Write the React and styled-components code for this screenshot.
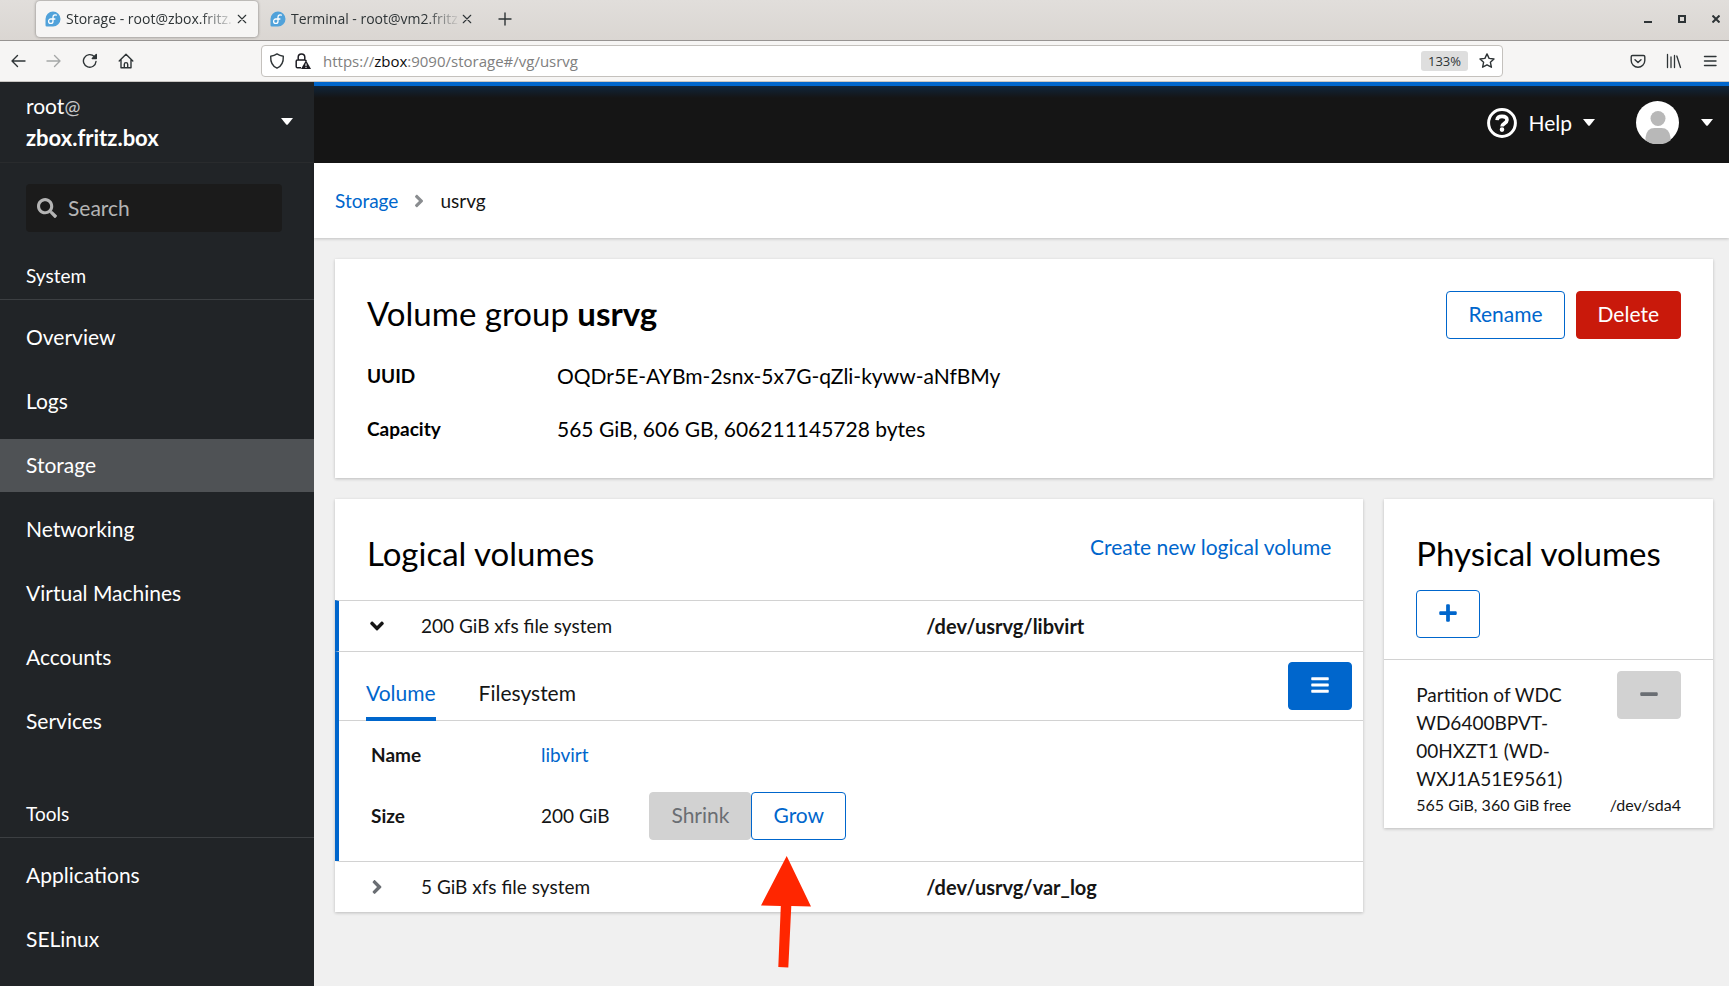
import { useState } from 'react';
import styled, { createGlobalStyle } from 'styled-components';
import {
  FaAngleDown,
  FaAngleRight,
  FaBars,
  FaMinus,
  FaPlus,
  FaSearch,
} from 'react-icons/fa';

const GlobalStyle = createGlobalStyle`
  *, *::before, *::after {
    box-sizing: border-box;
  }

  body {
    margin: 0;
    color: #151515;
    background: #f0f0f0;
    font-family: Lato, "Open Sans", sans-serif;
    font-size: 21px;
    line-height: 32px;
  }

  button, input {
    font: inherit;
    color: inherit;
  }

  button {
    cursor: pointer;
  }

  a {
    color: #06c;
    text-decoration: none;
  }

  svg {
    display: block;
    flex-shrink: 0;
  }
`;

const Window = styled.div`
  display: flex;
  flex-direction: column;
  min-height: 100vh;
`;

/* ---------- browser chrome ---------- */

const Chrome = styled.div`
  font-family: "Open Sans", "Noto Sans", sans-serif;
  font-size: 14px;
  line-height: 20px;
  color: #2e3436;
`;

const TabStrip = styled.div`
  display: flex;
  align-items: center;
  height: 41px;
  padding: 0 9px 3px 36px;
  background: linear-gradient(#e1dedb, #dad6d2);
  border-bottom: 1px solid #979492;
`;

const BrowserTab = styled.div`
  display: flex;
  align-items: center;
  width: 222px;
  height: 36px;
  margin-right: 3px;
  padding: 0 10px 0 9px;
  border-radius: 4px;
  background: ${props => (props.$active ? '#f6f5f4' : 'transparent')};
  box-shadow: ${props => (props.$active ? '0 0 3px rgba(0, 0, 0, 0.45)' : 'none')};
`;

const TabTitle = styled.span`
  flex: 1;
  margin-left: 5px;
  white-space: nowrap;
  mask-image: linear-gradient(to left, transparent, #000 36px);
`;

const ChromeButton = styled.button`
  display: flex;
  align-items: center;
  justify-content: center;
  width: ${props => props.$size || 32}px;
  height: ${props => props.$size || 32}px;
  padding: 0;
  border: 0;
  background: transparent;
  opacity: ${props => (props.disabled ? 0.4 : 1)};
`;

const NewTabButton = styled(ChromeButton)`
  margin-left: 3px;
`;

const WindowControls = styled.div`
  display: flex;
  gap: 26px;
  margin-left: auto;
`;

const Toolbar = styled.div`
  display: flex;
  align-items: center;
  gap: 4px;
  height: 41px;
  padding: 0 3px 0 2px;
  background: #f6f5f4;
  border-bottom: 1px solid #c9c6c3;
`;

const AddressBar = styled.div`
  flex: 1;
  display: flex;
  align-items: center;
  gap: 10px;
  height: 32px;
  margin: 0 115px;
  padding: 0 3px 0 7px;
  background: #fff;
  border: 1px solid #c4c1bd;
  border-radius: 4px;
`;

const Url = styled.span`
  flex: 1;
  margin-left: 2px;
  font-size: 15px;
  color: #808080;

  b {
    font-weight: 400;
    color: #0c0c0d;
  }
`;

const ZoomLevel = styled.button`
  height: 20px;
  margin-right: -3px;
  padding: 0 7px;
  border: 0;
  border-radius: 3px;
  background: #dedede;
  font-size: 13px;
  line-height: 20px;
  color: #2e3436;
`;

/* ---------- sidebar ---------- */

const Shell = styled.div`
  flex: 1;
  display: flex;
`;

const Sidebar = styled.aside`
  width: 314px;
  flex-shrink: 0;
  color: #fff;
  background: #212427;
`;

const HostSwitcher = styled.button`
  display: flex;
  align-items: center;
  justify-content: space-between;
  width: 100%;
  height: 81px;
  padding: 0 21px 1px 26px;
  border: 0;
  border-bottom: 1px solid #292b2d;
  background: transparent;
  text-align: left;

  small {
    font-size: 19px;
    line-height: 20px;
    color: #c8c9ca;
  }

  strong {
    display: block;
    font-size: 22px;
  }
`;

const SearchBox = styled.label`
  display: flex;
  align-items: center;
  gap: 11px;
  height: 48px;
  margin: 21px 32px 0 26px;
  padding: 0 11px;
  border-radius: 4px;
  background: #1b1b1b;
  color: #b4b4b4;

  input {
    min-width: 0;
    flex: 1;
    padding: 0;
    border: 0;
    outline: 0;
    background: transparent;
  }

  input::placeholder {
    color: #b4b4b4;
    opacity: 1;
  }
`;

const NavHeading = styled.h2`
  margin: 30px 0 0;
  padding: 0 26px 9px;
  border-bottom: 1px solid #3c3f42;
  font-size: 19px;
  font-weight: 400;
  line-height: 28px;
`;

const NavList = styled.ul`
  display: flex;
  flex-direction: column;
  gap: 11px;
  margin: 0;
  padding: 11px 0 22px;
  list-style: none;
`;

const NavLink = styled.a`
  display: block;
  padding: 10px 26px 11px;
  color: #fff;
  background: ${props => (props.$current ? '#4f5255' : 'transparent')};
`;

/* ---------- main area ---------- */

const Main = styled.div`
  flex: 1;
  min-width: 0;
`;

const Masthead = styled.header`
  display: flex;
  align-items: center;
  justify-content: flex-end;
  height: 81px;
  padding-right: 16px;
  color: #fff;
  background: linear-gradient(#06c 4px, #10253b 4px, #151515 16px);
`;

const MastheadButton = styled.button`
  display: flex;
  align-items: center;
  gap: ${props => props.$gap}px;
  height: 43px;
  margin-left: 41px;
  padding: 0;
  border: 0;
  background: transparent;
`;

const Breadcrumb = styled.nav`
  position: relative;
  display: flex;
  align-items: center;
  gap: 11px;
  height: 75px;
  padding: 0 21px;
  background: #fff;
  box-shadow: 0 1px 3px rgba(3, 3, 3, 0.2);
  font-size: 19px;
  line-height: 28px;
  color: #151515;

  svg {
    color: #8a8d90;
  }
`;

const Content = styled.main`
  display: grid;
  grid-template-columns: repeat(4, minmax(0, 1fr));
  align-items: start;
  gap: 21px;
  padding: 21px 16px 21px 21px;
`;

const Card = styled.section`
  grid-column: span ${props => props.$span};
  background: #fff;
  box-shadow: 0 1px 3px rgba(3, 3, 3, 0.22);
`;

const CardHeader = styled.div`
  display: flex;
  flex-wrap: wrap;
  align-items: flex-start;
  justify-content: space-between;
  gap: 15px;
  padding: 32px 32px ${props => props.$bottom}px;
`;

const CardTitle = styled.h2`
  margin: 0;
  font-size: 33px;
  font-weight: 400;
  line-height: 44px;
  color: #000;
`;

const Actions = styled.div`
  display: flex;
  gap: 11px;
`;

const variants = {
  secondary: { color: '#06c', bg: '#fff', border: '#06c' },
  danger: { color: '#fff', bg: '#c9190b', border: '#c9190b' },
  primary: { color: '#fff', bg: '#06c', border: '#06c' },
  disabled: { color: '#6a6e73', bg: '#d2d2d2', border: '#d2d2d2' },
};

const Button = styled.button`
  display: inline-flex;
  align-items: center;
  justify-content: center;
  height: 48px;
  padding: 0 21px 2px;
  border: 1px solid ${props => variants[props.$variant].border};
  border-radius: 4px;
  color: ${props => variants[props.$variant].color};
  background: ${props => variants[props.$variant].bg};
`;

const LinkButton = styled.button`
  padding: 0;
  border: 0;
  background: transparent;
  color: #06c;
`;

const Facts = styled.dl`
  display: grid;
  grid-template-columns: 190px 1fr;
  row-gap: 21px;
  margin: 0;
  padding: 0 32px 33px;
  color: #000;

  dt {
    font-size: 19px;
    font-weight: 700;
  }

  dd {
    margin: 0;
  }
`;

const VolumeTable = styled.table`
  width: 100%;
  border-collapse: separate;
  border-spacing: 0;
  table-layout: fixed;
  font-size: 19px;
  line-height: 28px;

  th, td {
    padding: 0;
    text-align: left;
    border-top: 1px solid #d2d2d2;
  }
`;

const ToggleCell = styled.td`
  width: 86px;
  border-left: 4px solid ${props => (props.$open ? '#06c' : 'transparent')};
`;

const Toggle = styled.button`
  display: flex;
  align-items: center;
  justify-content: center;
  width: 24px;
  height: 50px;
  margin-left: 26px;
  padding: 0;
  border: 0;
  background: transparent;
  color: ${props => (props.$open ? '#151515' : '#6a6e73')};
`;

const PathCell = styled.th`
  width: 437px;
  font-size: 20px;
  font-weight: 700;
`;

const PanelCell = styled.td`
  border-left: 4px solid #06c;
`;

const TabBar = styled.div`
  display: flex;
  align-items: flex-end;
  height: 69px;
  padding: 0 11px 0 27px;
  border-bottom: 1px solid #d2d2d2;
  font-size: 21px;
  line-height: 32px;
`;

const Tab = styled.button`
  margin: 0 43px -1px 0;
  padding: 0 0 8px;
  border: 0;
  border-bottom: 4px solid ${props => (props.$active ? '#06c' : 'transparent')};
  background: transparent;
  color: ${props => (props.$active ? '#06c' : '#151515')};
`;

const TabMenu = styled.div`
  align-self: center;
  margin-left: auto;
`;

const Details = styled.dl`
  display: grid;
  grid-template-columns: 170px 1fr;
  row-gap: 23px;
  align-items: center;
  margin: 0;
  padding: 20px 32px 21px;

  dt {
    font-weight: 700;
  }

  dd {
    margin: 0;
  }
`;

const SizeValue = styled.dd`
  display: flex;
  align-items: center;
  gap: 40px;
`;

const ResizeButtons = styled.div`
  display: flex;
  font-size: 21px;
`;

const Pointed = styled.div`
  position: relative;
`;

const Arrow = styled.svg`
  position: absolute;
  top: 64px;
  left: 10px;
  pointer-events: none;
`;

const PhysicalVolume = styled.div`
  padding: 11px 32px;
  border-top: 1px solid #d2d2d2;
`;

const DiskRow = styled.div`
  display: flex;
  align-items: flex-start;
  justify-content: space-between;
  gap: 21px;
`;

const DiskName = styled.div`
  padding-top: 10px;
  font-size: 19px;
  line-height: 28px;
`;

const DiskUsage = styled.div`
  display: flex;
  justify-content: space-between;
  font-size: 16px;
  line-height: 24px;
`;

/* ---------- drawings ---------- */

const Stroke = ({ size = 16, width = 1.4, children }) => (
  <svg
    width={size}
    height={size}
    viewBox="0 0 16 16"
    fill="none"
    stroke="currentColor"
    strokeWidth={width}
    strokeLinecap="round"
    strokeLinejoin="round"
  >
    {children}
  </svg>
);

const FedoraIcon = () => (
  <svg width="16" height="16" viewBox="0 0 16 16">
    <path d="M8 0.5a7.5 7.5 0 0 1 0 15H1.8Q0.5 15.5 0.5 14.2V8A7.5 7.5 0 0 1 8 0.5z" fill="#51a2da" />
    <path
      d="M11.3 4.1C9.7 3.3 8 4.2 8 6.1v4.1a2.2 2.2 0 1 1-2.2-2.2h4.1"
      fill="none"
      stroke="#fff"
      strokeWidth="1.3"
      strokeLinecap="round"
    />
  </svg>
);

const CloseIcon = () => <Stroke size={12} width={1.5}><path d="M3 3l10 10M13 3L3 13" /></Stroke>;

const BackIcon = () => <Stroke><path d="M15 8H2M7.5 2.5L2 8l5.5 5.5" /></Stroke>;

const ForwardIcon = () => <Stroke><path d="M1 8h13M8.5 2.5L14 8l-5.5 5.5" /></Stroke>;

const ReloadIcon = () => (
  <Stroke>
    <path d="M14 8.5A6.3 6.3 0 1 1 12.3 3.6L14 5.2" />
    <path d="M14.3 1.5v4h-4z" fill="currentColor" />
  </Stroke>
);

const HomeIcon = () => (
  <Stroke>
    <path d="M1.2 8L8 1.3 14.8 8M3 6.5v8.2h10V6.5M6.3 14.5v-3.2q0-1.7 1.7-1.7t1.7 1.7v3.2" />
  </Stroke>
);

const ShieldIcon = () => (
  <Stroke>
    <path d="M8 0.9c1.9 1.3 4 2 6.3 2.3 0.3 5.5-1.6 9.9-6.3 12C3.3 13.1 1.4 8.7 1.7 3.2 4 2.9 6.1 2.2 8 0.9z" />
  </Stroke>
);

const LockWarningIcon = () => (
  <svg width="16" height="16" viewBox="0 0 16 16">
    <path
      d="M3.2 7V4.2a3.3 3.3 0 0 1 6.6 0V7M6 14.8H2.5q-1.3 0-1.3-1.3V8.3Q1.2 7 2.5 7h7.2q1.3 0 1.5 1"
      fill="none"
      stroke="#1c1b22"
      strokeWidth="1.5"
    />
    <path d="M11 7.3l5 8.7H6z" fill="#1c1b22" />
    <path d="M11 10.5v2.4M11 13.7v1.2" stroke="#fff" strokeWidth="1.1" />
  </svg>
);

const StarIcon = () => (
  <Stroke>
    <path d="M8 0.9l2.1 4.5 4.9 0.6-3.6 3.3 1 4.9L8 11.8l-4.4 2.4 1-4.9L1 6l4.9-0.6z" />
  </Stroke>
);

const PocketIcon = () => (
  <Stroke>
    <path d="M2.5 2.5h11q1.3 0 1.3 1.3v3.7a6.8 6.8 0 0 1-13.6 0V3.8q0-1.3 1.3-1.3zM5 6.7l3 2.8 3-2.8" />
  </Stroke>
);

const LibraryIcon = () => (
  <Stroke width={1.3}>
    <path d="M1.5 1.5v13M5 4v10.5M8.5 2.5v12M10.8 3l3.7 11.5" />
  </Stroke>
);

const MenuIcon = () => <Stroke><path d="M2.5 3.5h11.5M2.5 8h11.5M2.5 12.5h11.5" /></Stroke>;

const HelpIcon = () => (
  <svg width="30" height="30" viewBox="0 0 30 30" fill="none" stroke="#fff">
    <circle cx="15" cy="15" r="13.4" strokeWidth="3" />
    <path d="M10 12.1C10.3 9.6 12.2 8.4 15 8.4c3 0 5 1.4 5 3.7 0 3.4-5 3.1-5 6.5" strokeWidth="3.6" />
    <circle cx="15" cy="21.6" r="1.3" fill="#fff" strokeWidth="2" />
  </svg>
);

const AvatarIcon = () => (
  <svg width="43" height="43" viewBox="0 0 43 43">
    <circle cx="21.5" cy="21.5" r="21.5" fill="#fff" />
    <circle cx="22" cy="17.5" r="7.5" fill="#b8b8b8" />
    <path d="M9.5 39.5V36.5q1-9.5 9-9.5h7q8 0 9 9.5v3A21.5 21.5 0 0 1 9.5 39.5z" fill="#b8b8b8" />
  </svg>
);

const CaretIcon = () => (
  <svg width="12" height="7" viewBox="0 0 12 7">
    <path d="M0 0h12L7 6.3q-1 1-2 0z" fill="#fff" />
  </svg>
);

const tabs = ['Storage - root@zbox.fritz.', 'Terminal - root@vm2.fritz'];

const navigation = [
  {
    title: 'System',
    items: ['Overview', 'Logs', 'Storage', 'Networking', 'Virtual Machines', 'Accounts', 'Services'],
  },
  { title: 'Tools', items: ['Applications', 'SELinux'] },
];

const volumes = [
  { id: 'libvirt', description: '200 GiB xfs file system', path: '/dev/usrvg/libvirt', size: '200 GiB' },
  { id: 'var_log', description: '5 GiB xfs file system', path: '/dev/usrvg/var_log', size: '5 GiB' },
];

function BrowserChrome() {
  return (
    <Chrome>
      <TabStrip>
        {tabs.map((title, i) => (
          <BrowserTab key={title} $active={i === 0}>
            <FedoraIcon />
            <TabTitle>{title}</TabTitle>
            <ChromeButton $size={12} aria-label="Close tab"><CloseIcon /></ChromeButton>
          </BrowserTab>
        ))}
        <NewTabButton aria-label="New tab">
          <Stroke><path d="M8 2v12M2 8h12" /></Stroke>
        </NewTabButton>
        <WindowControls>
          <ChromeButton $size={8} aria-label="Minimize">
            <svg width="8" height="8"><path d="M0 7h8" stroke="#2e3436" strokeWidth="2" /></svg>
          </ChromeButton>
          <ChromeButton $size={8} aria-label="Maximize">
            <svg width="8" height="8"><path d="M1 1h6v6H1z" fill="none" stroke="#2e3436" strokeWidth="2" /></svg>
          </ChromeButton>
          <ChromeButton $size={8} aria-label="Close">
            <svg width="8" height="8"><path d="M0.5 0.5l7 7M7.5 0.5l-7 7" stroke="#2e3436" strokeWidth="2" /></svg>
          </ChromeButton>
        </WindowControls>
      </TabStrip>
      <Toolbar>
        <ChromeButton aria-label="Back"><BackIcon /></ChromeButton>
        <ChromeButton aria-label="Forward" disabled><ForwardIcon /></ChromeButton>
        <ChromeButton aria-label="Reload"><ReloadIcon /></ChromeButton>
        <ChromeButton aria-label="Home"><HomeIcon /></ChromeButton>
        <AddressBar>
          <ShieldIcon />
          <LockWarningIcon />
          <Url>https://<b>zbox</b>:9090/storage#/vg/usrvg</Url>
          <ZoomLevel>133%</ZoomLevel>
          <ChromeButton $size={24} aria-label="Bookmark"><StarIcon /></ChromeButton>
        </AddressBar>
        <ChromeButton aria-label="Pocket"><PocketIcon /></ChromeButton>
        <ChromeButton aria-label="Library"><LibraryIcon /></ChromeButton>
        <ChromeButton aria-label="Menu"><MenuIcon /></ChromeButton>
      </Toolbar>
    </Chrome>
  );
}

function SideNav() {
  return (
    <Sidebar>
      <HostSwitcher>
        <span>root<small>@</small><strong>zbox.fritz.box</strong></span>
        <CaretIcon />
      </HostSwitcher>
      <SearchBox>
        <FaSearch size={20} />
        <input type="search" placeholder="Search" aria-label="Search" />
      </SearchBox>
      <nav>
        {navigation.map(section => (
          <div key={section.title}>
            <NavHeading>{section.title}</NavHeading>
            <NavList>
              {section.items.map(item => (
                <li key={item}>
                  <NavLink href="#" $current={item === 'Storage'}>{item}</NavLink>
                </li>
              ))}
            </NavList>
          </div>
        ))}
      </nav>
    </Sidebar>
  );
}

function VolumePanel({ volume }) {
  const [tab, setTab] = useState('Volume');

  return (
    <>
      <TabBar>
        {['Volume', 'Filesystem'].map(name => (
          <Tab key={name} $active={tab === name} onClick={() => setTab(name)}>{name}</Tab>
        ))}
        <TabMenu>
          <Button $variant="primary" aria-label="Volume actions"><FaBars size={20} /></Button>
        </TabMenu>
      </TabBar>
      <Details>
        <dt>Name</dt>
        <dd><a href="#">{volume.id}</a></dd>
        <dt>Size</dt>
        <SizeValue>
          {volume.size}
          <ResizeButtons>
            <Button $variant="disabled" disabled>Shrink</Button>
            <Pointed>
              <Button $variant="secondary">Grow</Button>
              <Arrow width="50" height="112" viewBox="0 0 50 112">
                <path d="M25.7 0L50 50.5 30.3 50l-3 61.5-10-0.5 2.5-61L0 49.5z" fill="#ff2600" />
              </Arrow>
            </Pointed>
          </ResizeButtons>
        </SizeValue>
      </Details>
    </>
  );
}

function LogicalVolumes() {
  const [open, setOpen] = useState('libvirt');

  return (
    <Card $span={3}>
      <CardHeader $bottom={25}>
        <CardTitle>Logical volumes</CardTitle>
        <LinkButton>Create new logical volume</LinkButton>
      </CardHeader>
      <VolumeTable>
        {volumes.map(volume => {
          const isOpen = open === volume.id;
          return (
            <tbody key={volume.id}>
              <tr>
                <ToggleCell $open={isOpen}>
                  <Toggle
                    $open={isOpen}
                    aria-expanded={isOpen}
                    aria-label={`Details of ${volume.id}`}
                    onClick={() => setOpen(isOpen ? null : volume.id)}
                  >
                    {isOpen ? <FaAngleDown size={22} /> : <FaAngleRight size={22} />}
                  </Toggle>
                </ToggleCell>
                <td>{volume.description}</td>
                <PathCell scope="row">{volume.path}</PathCell>
              </tr>
              {isOpen && (
                <tr>
                  <PanelCell colSpan={3}><VolumePanel volume={volume} /></PanelCell>
                </tr>
              )}
            </tbody>
          );
        })}
      </VolumeTable>
    </Card>
  );
}

export default function App() {
  return (
    <Window>
      <GlobalStyle />
      <BrowserChrome />
      <Shell>
        <SideNav />
        <Main>
          <Masthead>
            <MastheadButton $gap={11}>
              <HelpIcon />
              <span>Help</span>
              <CaretIcon />
            </MastheadButton>
            <MastheadButton $gap={22} aria-label="Account">
              <AvatarIcon />
              <CaretIcon />
            </MastheadButton>
          </Masthead>
          <Breadcrumb aria-label="Breadcrumb">
            <a href="#">Storage</a>
            <FaAngleRight size={20} />
            <span>usrvg</span>
          </Breadcrumb>
          <Content>
            <Card $span={4}>
              <CardHeader $bottom={21}>
                <CardTitle>Volume group <b>usrvg</b></CardTitle>
                <Actions>
                  <Button $variant="secondary">Rename</Button>
                  <Button $variant="danger">Delete</Button>
                </Actions>
              </CardHeader>
              <Facts>
                <dt>UUID</dt>
                <dd>OQDr5E-AYBm-2snx-5x7G-qZli-kyww-aNfBMy</dd>
                <dt>Capacity</dt>
                <dd>565 GiB, 606 GB, 606211145728 bytes</dd>
              </Facts>
            </Card>
            <LogicalVolumes />
            <Card $span={1}>
              <CardHeader $bottom={21}>
                <CardTitle>Physical volumes</CardTitle>
                <Button $variant="secondary" aria-label="Add"><FaPlus size={20} /></Button>
              </CardHeader>
              <PhysicalVolume>
                <DiskRow>
                  <DiskName>Partition of WDC WD6400BPVT-00HXZT1 (WD-WXJ1A51E9561)</DiskName>
                  <Button $variant="disabled" disabled aria-label="Remove"><FaMinus size={20} /></Button>
                </DiskRow>
                <DiskUsage>
                  <span>565 GiB, 360 GiB free</span>
                  <span>/dev/sda4</span>
                </DiskUsage>
              </PhysicalVolume>
            </Card>
          </Content>
        </Main>
      </Shell>
    </Window>
  );
}
